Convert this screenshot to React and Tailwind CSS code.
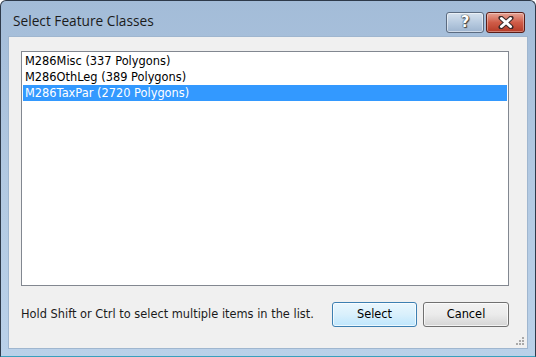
import React from 'react';

const items = [
  { id: 1, label: 'M286Misc (337 Polygons)' },
  { id: 2, label: 'M286OthLeg (389 Polygons)' },
  { id: 3, label: 'M286TaxPar (2720 Polygons)', selected: true },
];

const HelpButton = () => (
  <div className="flex h-[21px] w-[38px] items-center justify-center rounded-[3px] border border-[#5b6b80] bg-gradient-to-b from-[#d5e1ee] via-[#b8cbe0] to-[#9db4cf] shadow-[inset_0_0_0_1px_rgba(255,255,255,0.5)]">
    <span className="text-[15px] font-bold leading-none text-white [text-shadow:0_0_1px_#333,0_0_1px_#333,1px_1px_1px_#444]" style={{ fontFamily: '"DejaVu Sans", sans-serif' }}>?</span>
  </div>
);

const CloseButton = () => (
  <div className="flex h-[21px] w-[39px] items-center justify-center rounded-[3px] border border-[#5a1d17] bg-gradient-to-b from-[#e6a395] via-[#cf5c48] to-[#b53a26] shadow-[inset_0_0_0_1px_rgba(255,255,255,0.35)]">
    <svg width="16" height="13" viewBox="0 0 16 13">
      <path d="M3 2 L13 11 M13 2 L3 11" stroke="#3a2a2a" strokeWidth="5" strokeLinecap="round" />
      <path d="M3.5 2.5 L12.5 10.5 M12.5 2.5 L3.5 10.5" stroke="#ffffff" strokeWidth="3" strokeLinecap="round" />
    </svg>
  </div>
);

const ResizeGrip = () => (
  <svg width="12" height="12" viewBox="0 0 12 12" className="absolute bottom-[2px] right-[2px]">
    {[[9, 1], [6, 4], [9, 4], [3, 7], [6, 7], [9, 7]].map(([x, y], i) => (
      <rect key={i} x={x} y={y + 2} width="2" height="2" fill="#a9a9a9" />
    ))}
  </svg>
);

export default function App() {
  return (
    <div className="h-[357px] w-[536px] bg-white" style={{ fontFamily: '"DejaVu Sans", Tahoma, sans-serif' }}>
      <div className="flex h-full w-full flex-col rounded-t-[6px] border border-[#2e3a4a] border-b-[#3aa0bd] bg-gradient-to-b from-[#a3bcd8] via-[#b2c9e2] to-[#bad1e9] px-[7px] pb-[7px]">
        <div className="flex h-[35px] shrink-0 items-start justify-between">
          <span className="mt-[11px] pl-[5px] text-[13.7px] leading-[18px] text-[#1b1b1b]" style={{ fontFamily: '"Open Sans", "Noto Sans", sans-serif' }}>
            Select Feature Classes
          </span>
          <div className="mt-[11px] flex gap-[2px] pr-[3px]">
            <HelpButton />
            <CloseButton />
          </div>
        </div>
        <div className="relative flex flex-1 flex-col border border-[#9fb6cf] bg-[#f0f0f0] pl-[12px] pr-[18px]">
          <div className="mt-[14px] h-[235px] border border-[#828790] bg-white p-px">
            {items.map((item) => (
              <div
                key={item.id}
                className={`h-[16px] pl-[2px] text-[11.4px] leading-[16px] ${item.selected ? 'bg-[#3399ff] text-white' : 'text-black'}`}
              >
                {item.label}
              </div>
            ))}
          </div>
          <div className="mt-[16px] flex items-center">
            <span className="flex-1 text-[11.4px] text-[#1b1b1b]">Hold Shift or Ctrl to select multiple items in the list.</span>
            <button className="h-[25px] w-[85px] rounded-[3px] border border-[#3c7fb1] bg-gradient-to-b from-[#eaf6fd] via-[#d9f0fc] to-[#bee6fd] text-[11.4px] text-black shadow-[inset_0_0_0_1px_rgba(255,255,255,0.7)]">
              Select
            </button>
            <button className="ml-[6px] h-[25px] w-[86px] rounded-[3px] border border-[#707070] bg-gradient-to-b from-[#f2f2f2] via-[#ebebeb] to-[#d5d5d5] text-[11.4px] text-black shadow-[inset_0_0_0_1px_rgba(255,255,255,0.7)]">
              Cancel
            </button>
          </div>
          <ResizeGrip />
        </div>
      </div>
    </div>
  );
}
